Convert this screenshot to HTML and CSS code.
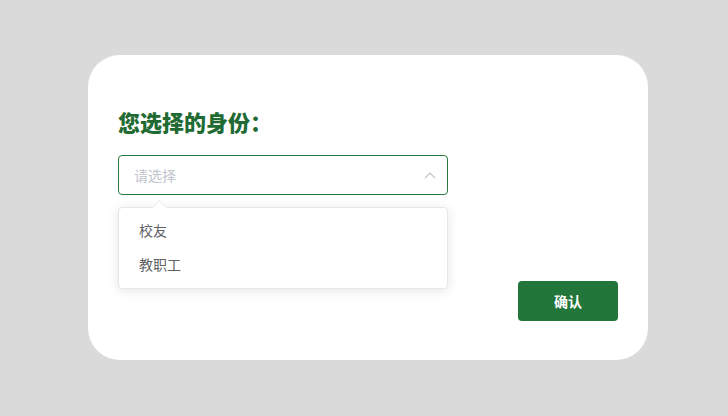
FILE: index.html
```html
<!DOCTYPE html>
<html lang="zh">
<head>
<meta charset="utf-8">
<link rel="stylesheet" href="styles.css">
</head>
<body>
<div class="card">
  <h2 class="title">您选择的身份：</h2>
  <div class="select-wrap">
    <div class="select">
      <span class="placeholder">请选择</span>
      <svg class="chev" width="12" height="8" viewBox="0 0 12 8"><path d="M1 7 L6 2 L11 7" fill="none" stroke="#c0c4cc" stroke-width="1.2"/></svg>
    </div>
    <div class="dropdown">
      <span class="arrow"></span>
      <ul class="list">
        <li class="item">校友</li>
        <li class="item">教职工</li>
      </ul>
    </div>
  </div>
  <div class="actions">
    <button class="btn">确认</button>
  </div>
</div>
</body>
</html>
```
FILE: styles.css
```css
html, body {
  margin: 0;
  padding: 0;
  background: #dadada;
  width: 728px;
  height: 416px;
  overflow: hidden;
  font-family: "Noto Sans CJK SC", "Noto Sans", sans-serif;
}
.card {
  box-sizing: border-box;
  margin: 55px 0 0 88px;
  width: 560px;
  height: 305px;
  background: #fff;
  border-radius: 32px;
  padding: 52px 30px 39px 30px;
  display: flex;
  flex-direction: column;
}
.title {
  margin: 0;
  font-size: 22px;
  line-height: 28px;
  font-weight: 900;
  color: #1f6b33;
}
.select-wrap {
  position: relative;
  width: 330px;
  margin-top: 20px;
}
.select {
  box-sizing: border-box;
  height: 40px;
  border: 1px solid #2a7a3e;
  border-radius: 4px;
  display: flex;
  align-items: center;
  justify-content: space-between;
  padding: 0 11px 0 15px;
}
.placeholder {
  font-size: 14px;
  color: #c0c4cc;
}
.chev {
  display: block;
}
.dropdown {
  position: absolute;
  left: 0;
  top: 52px;
  width: 330px;
  box-sizing: border-box;
  background: #fff;
  border: 1px solid #e4e7ed;
  border-radius: 4px;
  box-shadow: 0 2px 12px rgba(0,0,0,0.1);
  z-index: 2;
}
.arrow {
  position: absolute;
  top: -6px;
  left: 35px;
  width: 10px;
  height: 10px;
  background: #fff;
  border-left: 1px solid #ebeef5;
  border-top: 1px solid #ebeef5;
  transform: rotate(45deg);
}
.list {
  list-style: none;
  margin: 0;
  padding: 5px 0 7px;
  position: relative;
}
.item {
  height: 34px;
  line-height: 34px;
  padding: 0 20px;
  font-size: 14px;
  color: #606266;
}
.actions {
  margin-top: auto;
  display: flex;
  justify-content: flex-end;
}
.btn {
  width: 100px;
  height: 40px;
  border: none;
  border-radius: 4px;
  background: #237639;
  color: #fff;
  font-family: inherit;
  font-size: 14px;
  font-weight: 700;
}
```
